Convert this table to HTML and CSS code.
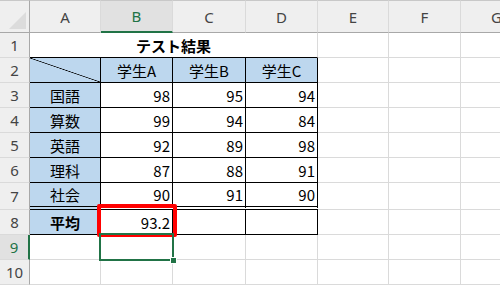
FILE: index.html
```html
<!DOCTYPE html>
<html lang="ja">
  <head>
    <meta charset="UTF-8" />
    <meta name="viewport" content="width=device-width, initial-scale=1.0" />
    <title>テスト結果</title>
    <link rel="stylesheet" href="styles.css">
  </head>
  <body>
    <div class="sheet">
      <!-- column headers -->
      <div class="corner"><span class="corner-mark"></span></div>
      <div class="hd">A</div>
      <div class="hd hd-active">B</div>
      <div class="hd">C</div>
      <div class="hd">D</div>
      <div class="hd">E</div>
      <div class="hd">F</div>
      <div class="hd">G</div>

      <!-- row 1 -->
      <div class="rh">1</div>
      <div class="c title">テスト結果</div>
      <div class="c"></div>
      <div class="c"></div>
      <div class="c"></div>

      <!-- row 2 -->
      <div class="rh">2</div>
      <div class="c t lbl diag"></div>
      <div class="c t lbl mid">学生A</div>
      <div class="c t lbl mid">学生B</div>
      <div class="c t lbl mid">学生C</div>
      <div class="c"></div>
      <div class="c"></div>
      <div class="c"></div>

      <!-- row 3 -->
      <div class="rh">3</div>
      <div class="c t lbl mid">国語</div>
      <div class="c t num">98</div>
      <div class="c t num">95</div>
      <div class="c t num">94</div>
      <div class="c"></div>
      <div class="c"></div>
      <div class="c"></div>

      <!-- row 4 -->
      <div class="rh">4</div>
      <div class="c t lbl mid">算数</div>
      <div class="c t num">99</div>
      <div class="c t num">94</div>
      <div class="c t num">84</div>
      <div class="c"></div>
      <div class="c"></div>
      <div class="c"></div>

      <!-- row 5 -->
      <div class="rh">5</div>
      <div class="c t lbl mid">英語</div>
      <div class="c t num">92</div>
      <div class="c t num">89</div>
      <div class="c t num">98</div>
      <div class="c"></div>
      <div class="c"></div>
      <div class="c"></div>

      <!-- row 6 -->
      <div class="rh">6</div>
      <div class="c t lbl mid">理科</div>
      <div class="c t num">87</div>
      <div class="c t num">88</div>
      <div class="c t num">91</div>
      <div class="c"></div>
      <div class="c"></div>
      <div class="c"></div>

      <!-- row 7 -->
      <div class="rh">7</div>
      <div class="c t dbl lbl mid">社会</div>
      <div class="c t dbl num">90</div>
      <div class="c t dbl num">91</div>
      <div class="c t dbl num">90</div>
      <div class="c"></div>
      <div class="c"></div>
      <div class="c"></div>

      <!-- row 8 -->
      <div class="rh">8</div>
      <div class="c t lbl mid bold">平均</div>
      <div class="c t num">93.2</div>
      <div class="c t"></div>
      <div class="c t"></div>
      <div class="c"></div>
      <div class="c"></div>
      <div class="c"></div>

      <!-- row 9 -->
      <div class="rh rh-active">9</div>
      <div class="c"></div>
      <div class="c"></div>
      <div class="c"></div>
      <div class="c"></div>
      <div class="c"></div>
      <div class="c"></div>
      <div class="c"></div>

      <!-- row 10 -->
      <div class="rh">10</div>
      <div class="c"></div>
      <div class="c"></div>
      <div class="c"></div>
      <div class="c"></div>
      <div class="c"></div>
      <div class="c"></div>
      <div class="c"></div>

      <!-- red highlight around the average, active cell frame on B9 -->
      <div class="highlight"></div>
      <div class="selection"><span class="handle"></span></div>
    </div>
  </body>
</html>
```

FILE: styles.css
```css
* {
  margin: 0;
  padding: 0;
  box-sizing: border-box;
}
body {
  width: 500px;
  height: 285px;
  overflow: hidden;
  background: #fff;
  font-family: "Noto Sans CJK JP", "Noto Sans", sans-serif;
  font-size: 14px;
  color: #000;
}
.sheet {
  position: relative;
  display: grid;
  width: 533px;
  grid-template-columns: 30px 71px 72px 73px 72px 71px 72px 72px;
  grid-template-rows: 33px 25px 25px 25px 25px 25px 25px 27px 25px 25px 25px;
}

/* headers */
.corner,
.hd,
.rh {
  background: #efefef;
  color: #444;
  display: flex;
  align-items: center;
  justify-content: center;
  font-family: "Noto Sans", sans-serif;
  font-size: 15px;
}
.corner,
.hd {
  border-top: 1px solid #c8c8c8;
  border-right: 1px solid #dadada;
  border-bottom: 1px solid #a8a8a8;
}
.corner {
  position: relative;
  border-right-color: #a8a8a8;
}
.corner-mark {
  position: absolute;
  right: 3px;
  bottom: 3px;
  width: 17px;
  height: 17px;
  background: #dcdcdc;
  clip-path: polygon(100% 0, 100% 100%, 0 100%);
}
.hd-active {
  background: #e1e1e1;
  color: #217346;
  border-bottom: 2px solid #217346;
}
.rh {
  border-right: 1px solid #a8a8a8;
  border-bottom: 1px solid #dadada;
}
.rh-active {
  background: #e1e1e1;
  color: #217346;
  border-right: 2px solid #217346;
}

/* cells */
.c {
  display: flex;
  align-items: center;
  padding: 0 3px;
  border-right: 1px solid #dadada;
  border-bottom: 1px solid #dadada;
  white-space: nowrap;
  font-size: 15px;
}
.title {
  grid-column: span 4;
  justify-content: center;
  font-weight: bold;
  border-right-color: #dadada;
  border-bottom-color: #000;
}
.t {
  border-right-color: #000;
  border-bottom-color: #000;
}
.dbl {
  border-bottom: 4px double #000;
}
.lbl {
  background: #bdd7ee;
}
.mid {
  justify-content: center;
}
.num {
  justify-content: flex-end;
  padding-right: 2px;
}
.bold {
  font-weight: bold;
}
.diag {
  background: linear-gradient(to top right, transparent calc(50% - 0.7px), #000 50%, transparent calc(50% + 0.7px)), #bdd7ee;
}

.highlight {
  position: absolute;
  left: 97px;
  top: 204px;
  width: 80px;
  height: 33px;
  border: 4px solid #ff0000;
  border-radius: 2px;
}
.selection {
  position: absolute;
  left: 99px;
  top: 233px;
  width: 75px;
  height: 28px;
  border: 2px solid #217346;
}
.handle {
  position: absolute;
  right: -5px;
  bottom: -5px;
  width: 7px;
  height: 7px;
  background: #217346;
  border: 1px solid #fff;
}
```
